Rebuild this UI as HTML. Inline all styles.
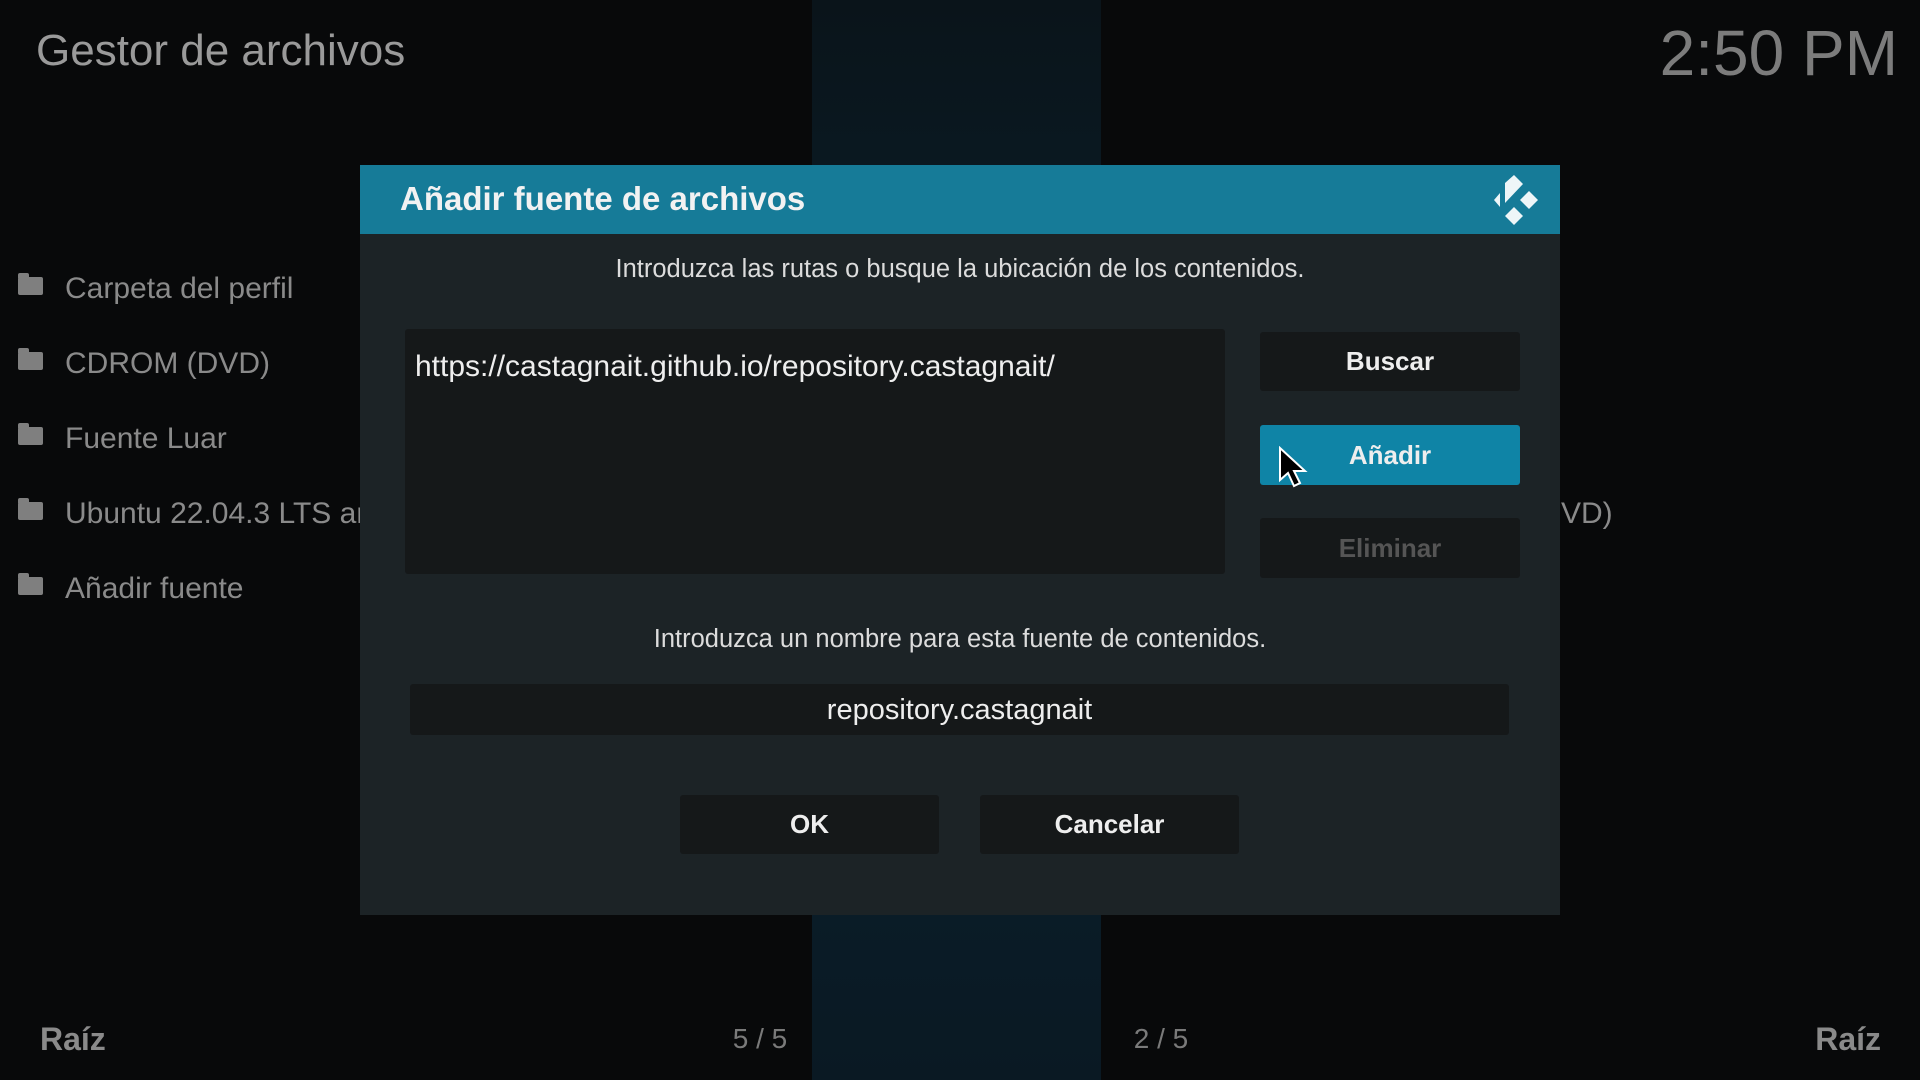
<!DOCTYPE html>
<html><head><meta charset="utf-8"><style>
*{margin:0;padding:0;box-sizing:border-box}
body{width:1920px;height:1080px;overflow:hidden;background:#08090a;font-family:"Liberation Sans","DejaVu Sans",sans-serif;position:relative}
.abs{position:absolute}
.col{left:812px;top:0;width:289px;height:1080px;background:linear-gradient(#0a141a,#0a2230 50%,#0a1923)}
.t{white-space:nowrap}
.li{left:18px;color:#8a8a8a;font-size:30px}
.li .ic{position:absolute;left:0;top:-10px;width:25px;height:18px;background:#7f7f7f;border-radius:2px}
.li .ic:before{content:"";position:absolute;left:0;top:-4px;width:11px;height:5px;background:#7f7f7f;border-radius:2px 2px 0 0}
.li span{position:absolute;left:47px;top:-15px}
.btn{position:absolute;background:#151819;border-radius:3px;color:#eee;font-weight:bold;font-size:26px;display:flex;align-items:center;justify-content:center}
</style></head><body>
<div class="abs col"></div>
<div class="abs t" style="left:36px;top:26px;font-size:44px;color:#9a9a9a">Gestor de archivos</div>
<div class="abs t" style="right:22px;top:16px;font-size:64px;color:#7c7c7c;letter-spacing:0px">2:50 PM</div>

<div class="abs li" style="top:287px"><div class="ic"></div><span class="t">Carpeta del perfil</span></div>
<div class="abs li" style="top:362px"><div class="ic"></div><span class="t">CDROM (DVD)</span></div>
<div class="abs li" style="top:437px"><div class="ic"></div><span class="t">Fuente Luar</span></div>
<div class="abs li" style="top:512px"><div class="ic"></div><span class="t">Ubuntu 22.04.3 LTS an</span></div>
<div class="abs li" style="top:587px"><div class="ic"></div><span class="t">Añadir fuente</span></div>
<div class="abs t" style="left:1561px;top:497px;font-size:30px;color:#8a8a8a">VD)</div>

<div class="abs" style="left:360px;top:165px;width:1200px;height:750px;background:#1c2326"></div>
<div class="abs" style="left:360px;top:165px;width:1200px;height:69px;background:#167b98"></div>
<div class="abs t" style="left:400px;top:180px;font-size:33px;color:#f2f2f2;font-weight:bold">Añadir fuente de archivos</div>
<svg class="abs" style="left:1490px;top:175px" width="56" height="50" viewBox="0 0 56 50">
<g fill="#eef6f8"><polygon points="4,25 10,18 10,32"/><polygon points="15,8 24,0 33,9 15,28"/><polygon points="30,25 39,16 48,25 39,34"/><polygon points="15,41 24,32 33,41 24,50"/></g></svg>

<div class="abs" style="left:360px;top:255px;width:1200px;text-align:center;font-size:25.5px;color:#dcdcdc">Introduzca las rutas o busque la ubicación de los contenidos.</div>
<div class="abs" style="left:405px;top:329px;width:820px;height:245px;background:#151819;border-radius:3px"></div>
<div class="abs t" style="left:415px;top:350px;font-size:30px;color:#eee">https://castagnait.github.io/repository.castagnait/</div>

<div class="btn" style="left:1260px;top:332px;width:260px;height:59px">Buscar</div>
<div class="btn" style="left:1260px;top:425px;width:260px;height:60px;background:#0f84a6">Añadir</div>
<div class="btn" style="left:1260px;top:518px;width:260px;height:60px;color:#555">Eliminar</div>
<svg class="abs" style="left:1278px;top:446px" width="30" height="46" viewBox="0 0 30 46"><polygon points="2,2 2,34 10,27 16,40 22,37 16,25 27,25" fill="#000" stroke="#fff" stroke-width="2"/></svg>

<div class="abs" style="left:360px;top:625px;width:1200px;text-align:center;font-size:25.5px;color:#dcdcdc">Introduzca un nombre para esta fuente de contenidos.</div>
<div class="abs" style="left:410px;top:684px;width:1099px;height:51px;background:#151819;border-radius:3px;text-align:center;font-size:29px;color:#eee;line-height:53px">repository.castagnait</div>

<div class="btn" style="left:680px;top:795px;width:259px;height:59px">OK</div>
<div class="btn" style="left:980px;top:795px;width:259px;height:59px">Cancelar</div>

<div class="abs t" style="left:40px;top:1021px;font-size:32px;color:#8a8a8a;font-weight:bold">Raíz</div>
<div class="abs t" style="left:700px;top:1023px;width:120px;text-align:center;font-size:28px;color:#7a7a7a">5 / 5</div>
<div class="abs t" style="left:1101px;top:1023px;width:120px;text-align:center;font-size:28px;color:#7a7a7a">2 / 5</div>
<div class="abs t" style="right:39px;top:1021px;font-size:32px;color:#8a8a8a;font-weight:bold">Raíz</div>
</body></html>
